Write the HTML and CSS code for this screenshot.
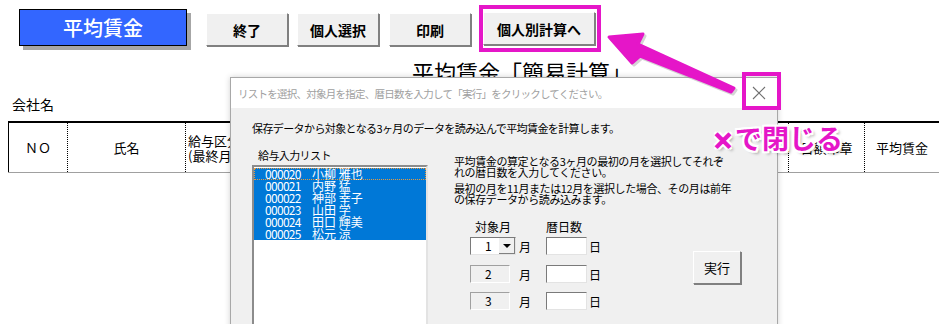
FILE: index.html
```html
<!DOCTYPE html>
<html lang="ja">
<head>
    <meta charset="UTF-8">
    <meta name="viewport" content="width=device-width, initial-scale=1.0">
    <title>平均賃金</title>
    <link rel="stylesheet" href="styles.css">
</head>
<body>
    <div class="sheet">
        <div class="toolbar">
            <div class="title-box">平均賃金</div>
            <button class="sheet-btn btn-end">終了</button>
            <button class="sheet-btn btn-pick">個人選択</button>
            <button class="sheet-btn btn-print">印刷</button>
            <button class="sheet-btn btn-next">個人別計算へ</button>
        </div>

        <div class="sheet-title">平均賃金「簡易計算」</div>
        <div class="company">会社名</div>

        <table class="grid">
            <tr>
                <th class="col-no">ＮＯ</th>
                <th class="col-name">氏名</th>
                <th class="col-kind">給与区分<br>(最終月</th>
                <th class="col-mid"></th>
                <th class="col-seal">日額印章</th>
                <th class="col-avg">平均賃金</th>
            </tr>
        </table>
    </div>

    <!-- dialog over the sheet -->
    <div class="dialog">
        <div class="dialog-title">
            <span>リストを選択、対象月を指定、暦日数を入力して「実行」をクリックしてください。</span>
            <svg class="close-x" width="14" height="14" viewBox="0 0 14 14">
                <path d="M1 1 L13 13 M13 1 L1 13" stroke="#707070" stroke-width="1.1" fill="none"/>
            </svg>
        </div>
        <div class="dialog-body">
            <p class="lead">保存データから対象となる3ヶ月のデータを読み込んで平均賃金を計算します。</p>
            <div class="dialog-cols">
                <div class="list-col">
                    <div class="list-label">給与入力リスト</div>
                    <div class="listbox">
                        <div class="item focus"><span class="code">000020</span>小柳 雅也</div>
                        <div class="item"><span class="code">000021</span>内野 猛</div>
                        <div class="item"><span class="code">000022</span>神部 幸子</div>
                        <div class="item"><span class="code">000023</span>山田 学</div>
                        <div class="item"><span class="code">000024</span>田口 輝美</div>
                        <div class="item"><span class="code">000025</span>松元 涼</div>
                    </div>
                </div>
                <div class="form-col">
                    <p class="note">平均賃金の算定となる3ヶ月の最初の月を選択してそれぞ<br>れの暦日数を入力してください。</p>
                    <p class="note">最初の月を11月または12月を選択した場合、その月は前年<br>の保存データから読み込みます。</p>
                    <div class="form-row">
                        <div class="months">
                            <div class="head">対象月</div>
                            <div></div>
                            <div class="head days">暦日数</div>
                            <div></div>

                            <div class="combo"><span>1</span><span class="drop"></span></div>
                            <div class="unit">月</div>
                            <div class="field"></div>
                            <div class="unit">日</div>

                            <div class="fixed">2</div>
                            <div class="unit">月</div>
                            <div class="field"></div>
                            <div class="unit">日</div>

                            <div class="fixed">3</div>
                            <div class="unit">月</div>
                            <div class="field"></div>
                            <div class="unit">日</div>
                        </div>
                        <button class="run-btn">実行</button>
                    </div>
                </div>
            </div>
        </div>
    </div>

    <!-- annotation marks -->
    <div class="mark mark-next"></div>
    <div class="mark mark-close"></div>
    <svg class="arrow" width="939" height="324" viewBox="0 0 939 324">
        <polygon points="609,37 643,34 638,44 734,88 731,92 640,56 632,63" fill="#888" opacity="0.35" transform="translate(2,2)" stroke="#888" stroke-width="3" stroke-linejoin="round"/>
        <polygon points="609,37 643,34 638,44 734,88 731,92 640,56 632,63" fill="#e516c8" stroke="#e516c8" stroke-width="3" stroke-linejoin="round"/>
    </svg>
    <div class="callout"><span class="cross">×</span>で閉じる</div>
</body>
</html>
```

FILE: styles.css
```css
body {
    margin: 0;
    width: 939px;
    height: 324px;
    overflow: hidden;
    background: #fff;
    font-family: "Noto Sans CJK JP", sans-serif;
    color: #000;
    position: relative;
}

/* sheet */
.toolbar {
    display: flex;
    align-items: flex-start;
    padding: 9px 0 0 19px;
    height: 43px;
}
.title-box {
    width: 166px;
    height: 35px;
    background: #3366ff;
    border: 1px solid #000;
    box-shadow: 4px 4px 0 #a6a6a6;
    color: #fff;
    font-size: 20px;
    font-weight: 500;
    line-height: 35px;
    text-align: center;
}
.sheet-btn {
    margin-top: 4px;
    height: 33px;
    width: 82px;
    padding: 0;
    background: #f0f0f0;
    border: 1px solid;
    border-color: #fff #808080 #808080 #fff;
    box-shadow: 1px 1px 0 #808080;
    font-family: "Noto Sans CJK JP", sans-serif;
    font-size: 14px;
    font-weight: bold;
    color: #000;
}
.btn-end { margin-left: 19px; }
.btn-pick { margin-left: 9px; }
.btn-print { margin-left: 10px; }
.btn-next { margin-left: 12px; margin-top: 3px; width: 112px; }

.sheet-title {
    margin: 6px 0 0 412px;
    font-size: 22px;
    line-height: 26px;
}
.company {
    margin-top: 12px;
    padding-left: 12px;
    font-size: 14px;
    line-height: 16px;
}
.grid {
    margin: 9px 0 0 8px;
    border-collapse: collapse;
    width: 960px;
    table-layout: fixed;
}
.grid th {
    height: 49px;
    border-top: 2px solid #000;
    border-bottom: 1px solid #a0a0a0;
    border-left: 1px dotted #000;
    font-size: 13px;
    font-weight: normal;
    padding: 0;
}
.grid th.col-no { border-left: 1px solid #000; width: 58px; }
.grid .col-name { width: 117px; }
.grid .col-kind { width: 130px; text-align: left; line-height: 15px; padding-left: 2px; }
.grid .col-mid { width: 469px; }
.grid .col-seal { width: 75px; }
.grid .col-avg { width: 100px; text-align: left; padding-left: 11px; }

/* dialog */
.dialog {
    position: absolute;
    left: 230px;
    top: 77px;
    width: 546px;
    height: 260px;
    border: 1px solid #a8a8a8;
    background: #f0f0f0;
    box-shadow: 0 0 6px rgba(0, 0, 0, 0.18);
}
.dialog-title {
    height: 30px;
    background: #fff;
    display: flex;
    align-items: center;
    justify-content: space-between;
    padding: 0 11px 0 7px;
    font-size: 10.5px;
    letter-spacing: -0.75px;
    color: #a0a0a0;
}
.dialog-body {
    padding: 13px 0 0 21px;
    font-size: 11px;
}
.lead {
    margin: 0;
    line-height: 14px;
    letter-spacing: -0.6px;
}
.dialog-cols {
    display: grid;
    grid-template-columns: 176px auto;
    column-gap: 26px;
    margin-top: 13px;
}
.list-label {
    padding-left: 6px;
    line-height: 14px;
    letter-spacing: -0.6px;
}
.listbox {
    margin-top: 3px;
    height: 170px;
    background: #fff;
    border: 2px solid;
    border-color: #8c8c8c #e3e3e3 #e3e3e3 #8c8c8c;
    padding-top: 1px;
}
.item {
    height: 12px;
    line-height: 12px;
    background: #0078d7;
    color: #fff;
    font-size: 12px;
    padding-left: 11px;
    white-space: pre;
}
.item.focus {
    outline: 1px dotted #e89a3c;
    outline-offset: -1px;
}
.code {
    display: inline-block;
    width: 47px;
    letter-spacing: -0.7px;
}

.form-col {
    padding-top: 8px;
}
.note {
    margin: 0 0 5px;
    line-height: 11px;
    letter-spacing: -0.4px;
}
.form-row {
    display: flex;
    align-items: flex-start;
    margin-top: 15px;
}
.months {
    margin-left: 16px;
    display: grid;
    grid-template-columns: 46px 30px 41px 14px;
    grid-template-rows: 17px 28px 27px 18px;
    align-items: start;
    font-size: 12px;
}
.months .head {
    line-height: 14px;
    white-space: nowrap;
    padding-left: 5px;
}
.months .head.days { padding-left: 0; }
.combo {
    height: 18px;
    box-sizing: border-box;
    display: flex;
    justify-content: space-between;
    background: #fff;
    border: 1px solid;
    border-color: #7a7a7a #e3e3e3 #e3e3e3 #7a7a7a;
    line-height: 16px;
    padding-left: 14px;
}
.drop {
    width: 16px;
    background: #f0f0f0;
    border-left: 1px solid #fff;
    box-shadow: inset -1px -1px 0 #808080;
    position: relative;
}
.drop::after {
    content: "";
    position: absolute;
    left: 4px;
    top: 6px;
    border-left: 4px solid transparent;
    border-right: 4px solid transparent;
    border-top: 4px solid #000;
}
.fixed {
    width: 40px;
    height: 18px;
    box-sizing: border-box;
    background: #f0f0f0;
    border: 1px solid;
    border-color: #a0a0a0 #fff #fff #a0a0a0;
    line-height: 15px;
    padding-left: 14px;
}
.field {
    height: 18px;
    box-sizing: border-box;
    background: #fff;
    border: 1px solid;
    border-color: #7a7a7a #e3e3e3 #e3e3e3 #7a7a7a;
}
.unit {
    line-height: 20px;
    padding-left: 3px;
}
.months .field + .unit { padding-left: 2px; }
.run-btn {
    margin: 31px 0 0 92px;
    width: 48px;
    height: 33px;
    padding: 0;
    background: #f0f0f0;
    border: 1px solid;
    border-color: #fff #808080 #808080 #fff;
    box-shadow: 1px 1px 0 #808080;
    font-family: "Noto Sans CJK JP", sans-serif;
    font-size: 13px;
    color: #000;
}

/* annotations */
.mark {
    position: absolute;
    border: 4px solid #e516c8;
    box-sizing: border-box;
}
.mark-next {
    left: 479px;
    top: 5px;
    width: 122px;
    height: 47px;
}
.mark-close {
    left: 742px;
    top: 72px;
    width: 39px;
    height: 38px;
}
.arrow {
    position: absolute;
    left: 0;
    top: 0;
}
.callout {
    position: absolute;
    left: 712px;
    top: 120px;
    font-size: 27px;
    font-weight: bold;
    line-height: 36px;
    color: #e516c8;
    text-shadow:
        -2px -2px 0 #fff, 2px -2px 0 #fff, -2px 2px 0 #fff, 2px 2px 0 #fff,
        0 -2px 0 #fff, 0 2px 0 #fff, -2px 0 0 #fff, 2px 0 0 #fff,
        3px 3px 3px rgba(0, 0, 0, 0.35);
}
.callout .cross {
    font-size: 22px;
    font-weight: 900;
    margin-right: 1px;
    -webkit-text-stroke: 1.5px #e516c8;
}
```
